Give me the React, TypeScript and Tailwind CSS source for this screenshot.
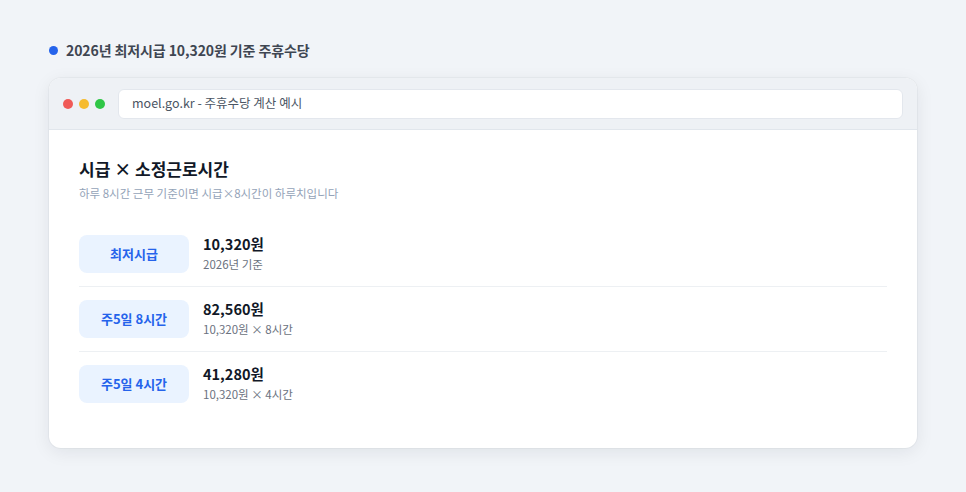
const rows = [
  { label: "최저시급", amount: "10,320원", note: "2026년 기준" },
  { label: "주5일 8시간", amount: "82,560원", note: "10,320원 × 8시간" },
  { label: "주5일 4시간", amount: "41,280원", note: "10,320원 × 4시간" },
];

const App = () => {
  return (
    <div
      className="min-h-[492px] w-full bg-[#f1f4f8] px-[49px] pt-[38px]"
      style={{ fontFamily: '"Noto Sans CJK KR", "Noto Sans", sans-serif' }}
    >
      {/* Heading */}
      <div className="flex items-center gap-[8px] h-[24px]">
        <span className="w-[9px] h-[9px] rounded-full bg-[#2563eb]" />
        <h2 className="text-[14px] font-bold text-[#3f4652] tracking-[-0.1px]">
          2026년 최저시급 10,320원 기준 주휴수당
        </h2>
      </div>

      {/* Browser window */}
      <div className="mt-[16px] w-[868px] rounded-[12px] bg-white shadow-[0_4px_18px_rgba(15,23,42,0.08),0_0_0_1px_rgba(15,23,42,0.03)] overflow-hidden">
        <div className="flex items-center h-[52px] bg-[#eef1f5] border-b border-[#e1e6ec] pl-[14px] pr-[14px]">
          <div className="flex gap-[6px]">
            <span className="w-[10px] h-[10px] rounded-full bg-[#f05a57]" />
            <span className="w-[10px] h-[10px] rounded-full bg-[#f6bb2f]" />
            <span className="w-[10px] h-[10px] rounded-full bg-[#2fc646]" />
          </div>
          <div className="ml-[13px] flex-1 h-[30px] rounded-[6px] bg-white border border-[#e3e7ed] flex items-center px-[13px] text-[12.5px] text-[#4b5563]">
            moel.go.kr - 주휴수당 계산 예시
          </div>
        </div>

        <div className="px-[30px] pt-[27px] pb-[32px]">
          <h3 className="text-[17px] font-bold text-[#111827] leading-[24px]">시급 × 소정근로시간</h3>
          <p className="mt-[4px] text-[11.5px] text-[#94a3b8] leading-[16px]">
            하루 8시간 근무 기준이면 시급×8시간이 하루치입니다
          </p>

          <div className="mt-[21px]">
            {rows.map((r, i) => (
              <div
                key={r.label}
                className={`flex items-center gap-[14px] py-[12px] ${
                  i < rows.length - 1 ? "border-b border-[#edf0f3]" : ""
                }`}
              >
                <div className="w-[110px] h-[38px] rounded-[8px] bg-[#eaf3ff] flex items-center justify-center text-[13px] font-bold text-[#2563eb]">
                  {r.label}
                </div>
                <div className="flex flex-col">
                  <span className="text-[14.5px] font-bold text-[#111827] leading-[20px]">{r.amount}</span>
                  <span className="text-[11.5px] text-[#6b7280] leading-[20px]">{r.note}</span>
                </div>
              </div>
            ))}
          </div>
        </div>
      </div>
    </div>
  );
};

export default App;
